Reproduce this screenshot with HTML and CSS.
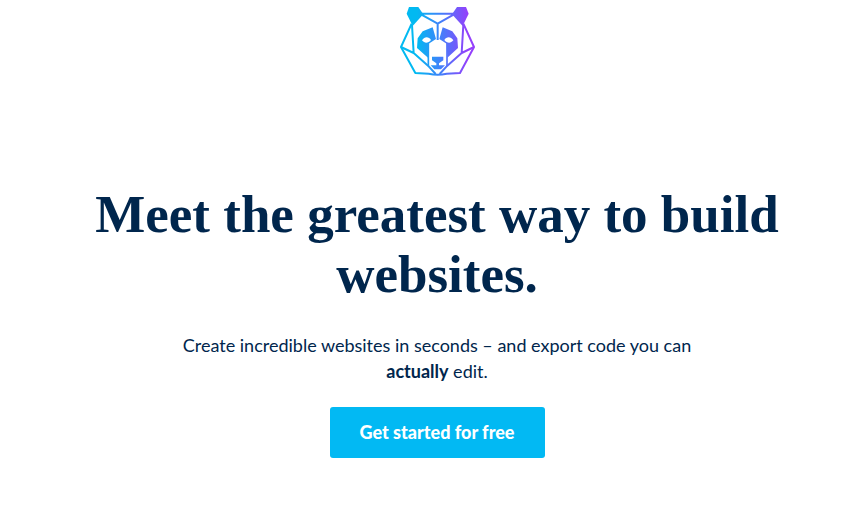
FILE: index.html
```html
<!DOCTYPE html>
<html lang="en">
<head>
<meta charset="utf-8">
<meta name="viewport" content="width=device-width, initial-scale=1">
<title>Website builder</title>
<link rel="stylesheet" href="styles.css">
</head>
<body>
<main class="hero">
  <svg class="logo" viewBox="9 12 225 207" role="img" aria-label="Bear logo">
    <defs>
      <linearGradient id="bear" gradientUnits="userSpaceOnUse" x1="60" y1="0" x2="212" y2="0">
        <stop offset="0" stop-color="#02b9f1"/>
        <stop offset="0.45" stop-color="#3f82fa"/>
        <stop offset="1" stop-color="#9440fb"/>
      </linearGradient>
    </defs>
    <g fill="none" stroke="url(#bear)" stroke-width="6" stroke-linejoin="round">
      <path d="M72 32H171M72 34L122 62L171 34M122 62V111"/>
      <path d="M44 62L12 132L55 210L95 212Q122 218 149 212L189 210L231 132L199 62"/>
      <path d="M45 66L50 150L93 188L116 213M12 132L50 150"/>
      <path d="M199 66L194 150L151 188L128 213M231 132L194 150"/>
      <path d="M94 120V190M150 120V190" stroke-width="5"/>
    </g>
    <g fill="url(#bear)">
      <path d="M36 12H64L79 34L47 69L29 32Z"/>
      <path d="M180 12H207L215 32L197 69L165 34Z"/>
      <path fill-rule="evenodd" d="M107 73L117 108L95 122L93 164L60 135L62 106L77 85ZM75 112C83 99 96 101 102 111C94 121 83 122 75 112Z"/>
      <path fill-rule="evenodd" d="M137 73L127 108L149 122L151 164L183 135L181 106L166 85ZM169 112C161 99 148 101 142 111C150 121 161 122 169 112Z"/>
      <path d="M105 161H139V172L126 181V187L144 187L132 199H112L101 187L118 187V181L105 172Z"/>
    </g>
  </svg>
  <h1 class="title">Meet the greatest way to build websites.</h1>
  <p class="lead">Create incredible websites in seconds – and export code you can <strong>actually</strong> edit.</p>
  <a class="cta" href="#start">Get started for free</a>
</main>
</body>
</html>
```
FILE: styles.css
```css
body {
  margin: 0;
  background: #fff;
  color: #00264d;
  font-family: "Lato", "Liberation Sans", sans-serif;
}

.hero {
  display: flex;
  flex-direction: column;
  align-items: center;
  padding: 7px 0 64px 28px;
  text-align: center;
}

.logo {
  display: block;
  width: 75px;
  height: 69px;
}

.title {
  max-width: 720px;
  margin: 108px 0 0;
  font-family: "Liberation Serif", serif;
  font-size: 53px;
  font-weight: 700;
  line-height: 60px;
}

.lead {
  max-width: 540px;
  margin: 28px 0 0;
  font-size: 18px;
  line-height: 26px;
}

.cta {
  margin-top: 23px;
  padding: 0 30px;
  border-radius: 3px;
  background: #02b9f3;
  color: #fff;
  font-size: 18px;
  font-weight: 900;
  line-height: 51px;
  text-decoration: none;
}
```
